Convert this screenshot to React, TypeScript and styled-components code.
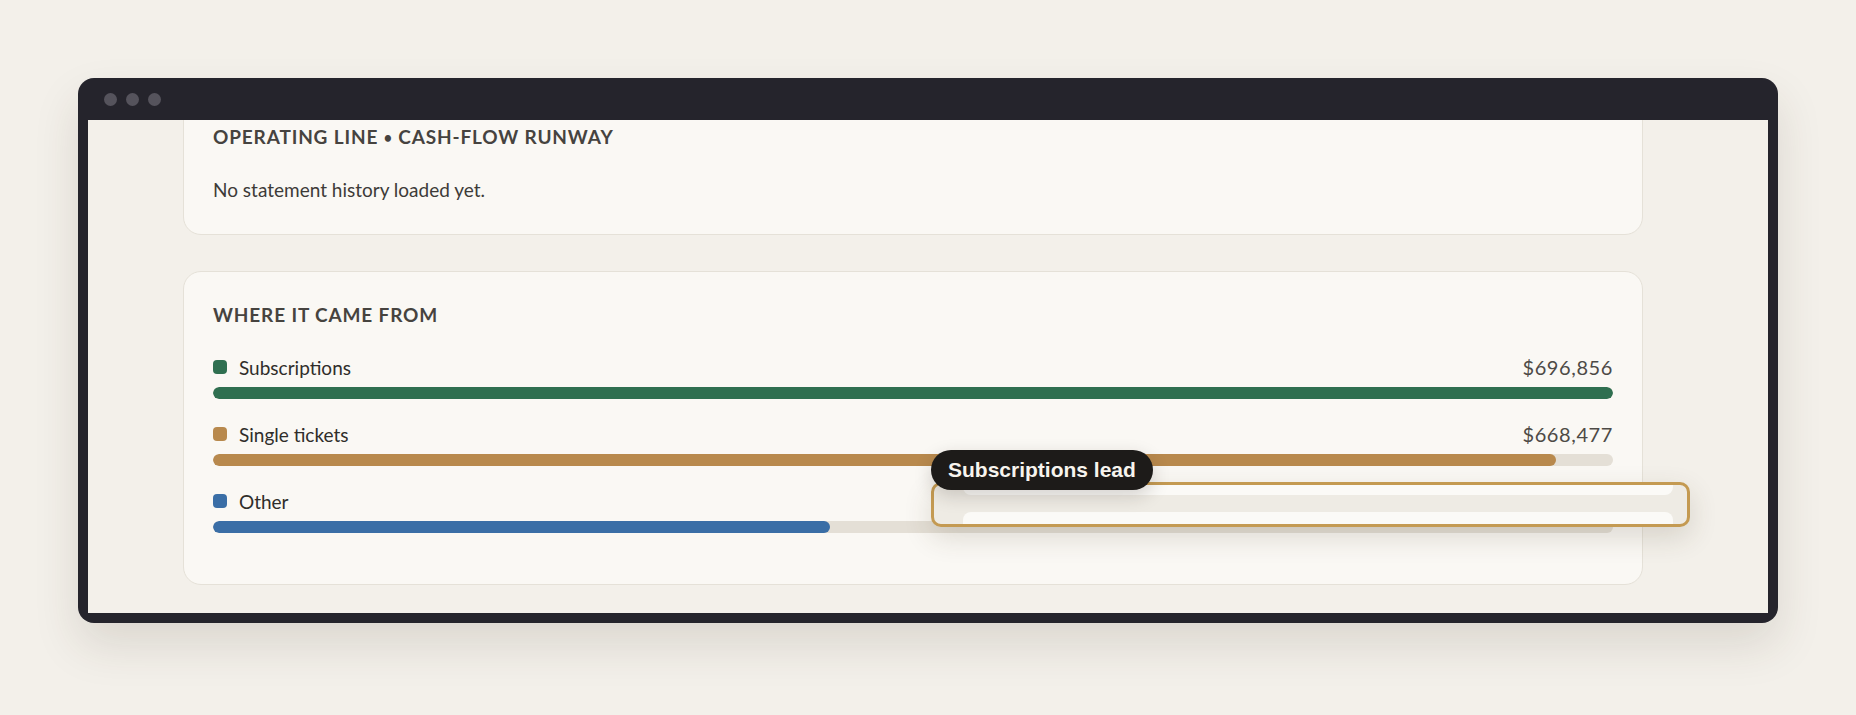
import * as React from "react";
import styled, { createGlobalStyle } from "styled-components";

const GlobalStyle = createGlobalStyle`
    html, body {
        margin: 0;
        padding: 0;
        background: #f3f0ea;
    }
    body {
        font-family: "Lato", "Inter", sans-serif;
        color: #3c3a37;
    }
`;

const Page = styled.div`
    width: 1856px;
    height: 715px;
    box-sizing: border-box;
    padding: 78px 78px 0 78px;
    background: #f3f0ea;
`;

const Frame = styled.div`
    width: 1700px;
    height: 545px;
    box-sizing: border-box;
    padding: 0 10px 10px 10px;
    background: #25242c;
    border-radius: 16px;
    box-shadow: 0 22px 46px rgba(60, 48, 30, 0.13);
    display: flex;
    flex-direction: column;
`;

const TitleBar = styled.div`
    height: 42px;
    flex: none;
    display: flex;
    align-items: center;
    gap: 9px;
    padding-left: 16px;
`;

const Dot = styled.span`
    width: 13px;
    height: 13px;
    border-radius: 50%;
    background: #55535c;
`;

const Viewport = styled.div`
    flex: 1;
    background: #f3f0ea;
    overflow-y: auto;
    overflow-x: hidden;
    scrollbar-width: none;
    &::-webkit-scrollbar {
        display: none;
    }
`;

const Column = styled.div`
    padding: 38px 125px 60px 95px;
    display: flex;
    flex-direction: column;
    gap: 36px;
`;

const Card = styled.section<{ top: number; bottom: number }>`
    position: relative;
    background: #faf8f4;
    border: 1px solid #e5e1d8;
    border-radius: 18px;
    padding: ${p => p.top}px 29px ${p => p.bottom}px 29px;
`;

const CardTitle = styled.h2<{ gap: number }>`
    margin: 0 0 ${p => p.gap}px 0;
    font-size: 19px;
    line-height: 24px;
    font-weight: 700;
    letter-spacing: 0.045em;
    text-transform: uppercase;
    color: #46433f;
`;

const Sep = styled.span`
    font-size: 0.75em;
    position: relative;
    top: -0.08em;
`;

const Muted = styled.p`
    margin: 0;
    font-size: 19px;
    line-height: 28px;
    color: #3d3b38;
`;

const Row = styled.div`
    margin-bottom: 23px;
`;

const RowHead = styled.div`
    display: flex;
    align-items: center;
    justify-content: space-between;
    height: 24px;
    margin-bottom: 8px;
`;

const Label = styled.span`
    display: flex;
    align-items: center;
    gap: 12px;
    font-size: 19px;
    color: #2f2d2a;
`;

const Swatch = styled.span<{ color: string }>`
    width: 14px;
    height: 14px;
    border-radius: 4px;
    background: ${p => p.color};
`;

const Amount = styled.span`
    font-size: 20px;
    letter-spacing: 0.03em;
    color: #4d4a46;
`;

const Track = styled.div`
    height: 12px;
    border-radius: 6px;
    background: #e4dfd6;
    overflow: hidden;
`;

const Fill = styled.div<{ color: string }>`
    height: 100%;
    border-radius: 6px;
    background: ${p => p.color};
`;

const Lens = styled.div`
    position: absolute;
    left: 747px;
    top: 210px;
    width: 759px;
    height: 45px;
    box-sizing: border-box;
    border: 3px solid #c49a52;
    border-radius: 10px;
    background: #eeebe4;
    box-shadow: 0 10px 28px rgba(70, 55, 30, 0.16);
    display: flex;
    flex-direction: column;
    justify-content: space-between;
    padding: 0 14px 0 29px;
    overflow: hidden;
`;

const LensEdge = styled.div<{ side: "top" | "bottom" }>`
    height: ${p => (p.side === "top" ? 10 : 12)}px;
    background: #fbfaf7;
    border-radius: ${p => (p.side === "top" ? "0 0 8px 8px" : "8px 8px 0 0")};
`;

const Tip = styled.div`
    position: absolute;
    left: 747px;
    top: 178px;
    height: 40px;
    padding: 0 17px;
    display: flex;
    align-items: center;
    border-radius: 20px;
    background: #1d1b19;
    color: #f7f4ee;
    font-family: "Liberation Sans", Arial, sans-serif;
    font-weight: 700;
    font-size: 21px;
    white-space: nowrap;
    box-shadow: 0 6px 18px rgba(40, 30, 20, 0.18);
`;

type Source = { name: string; amount: number; color: string };

const sources: Source[] = [
    { name: "Subscriptions", amount: 696856, color: "#2f6f50" },
    { name: "Single tickets", amount: 668477, color: "#b8894d" },
    { name: "Other", amount: 307240, color: "#3a6ea6" },
];

const money = (n: number) => "$" + n.toLocaleString("en-US");

export default function App() {
    const viewRef = React.useRef<HTMLDivElement>(null);
    React.useLayoutEffect(() => {
        if (viewRef.current) viewRef.current.scrollTop = 63;
    }, []);

    const max = Math.max(...sources.map(s => s.amount));
    const rows = sources.map(s => (
        <Row key={s.name}>
            <RowHead>
                <Label>
                    <Swatch color={s.color} />
                    {s.name}
                </Label>
                <Amount>{money(s.amount)}</Amount>
            </RowHead>
            <Track>
                <Fill color={s.color} style={{ width: `${(s.amount / max) * 100}%` }} />
            </Track>
        </Row>
    ));

    return (
        <Page>
            <GlobalStyle />
            <Frame>
                <TitleBar>
                    <Dot />
                    <Dot />
                    <Dot />
                </TitleBar>
                <Viewport ref={viewRef}>
                    <Column>
                        <Card top={29} bottom={30}>
                            <CardTitle gap={25}>
                                Operating line <Sep>•</Sep> Cash-flow runway
                            </CardTitle>
                            <Muted>No statement history loaded yet.</Muted>
                        </Card>
                        <Card top={31} bottom={28}>
                            <CardTitle gap={28}>Where it came from</CardTitle>
                            {rows}
                            <Lens>
                                <LensEdge side="top" />
                                <LensEdge side="bottom" />
                            </Lens>
                            <Tip>Subscriptions lead</Tip>
                        </Card>
                    </Column>
                </Viewport>
            </Frame>
        </Page>
    );
}
